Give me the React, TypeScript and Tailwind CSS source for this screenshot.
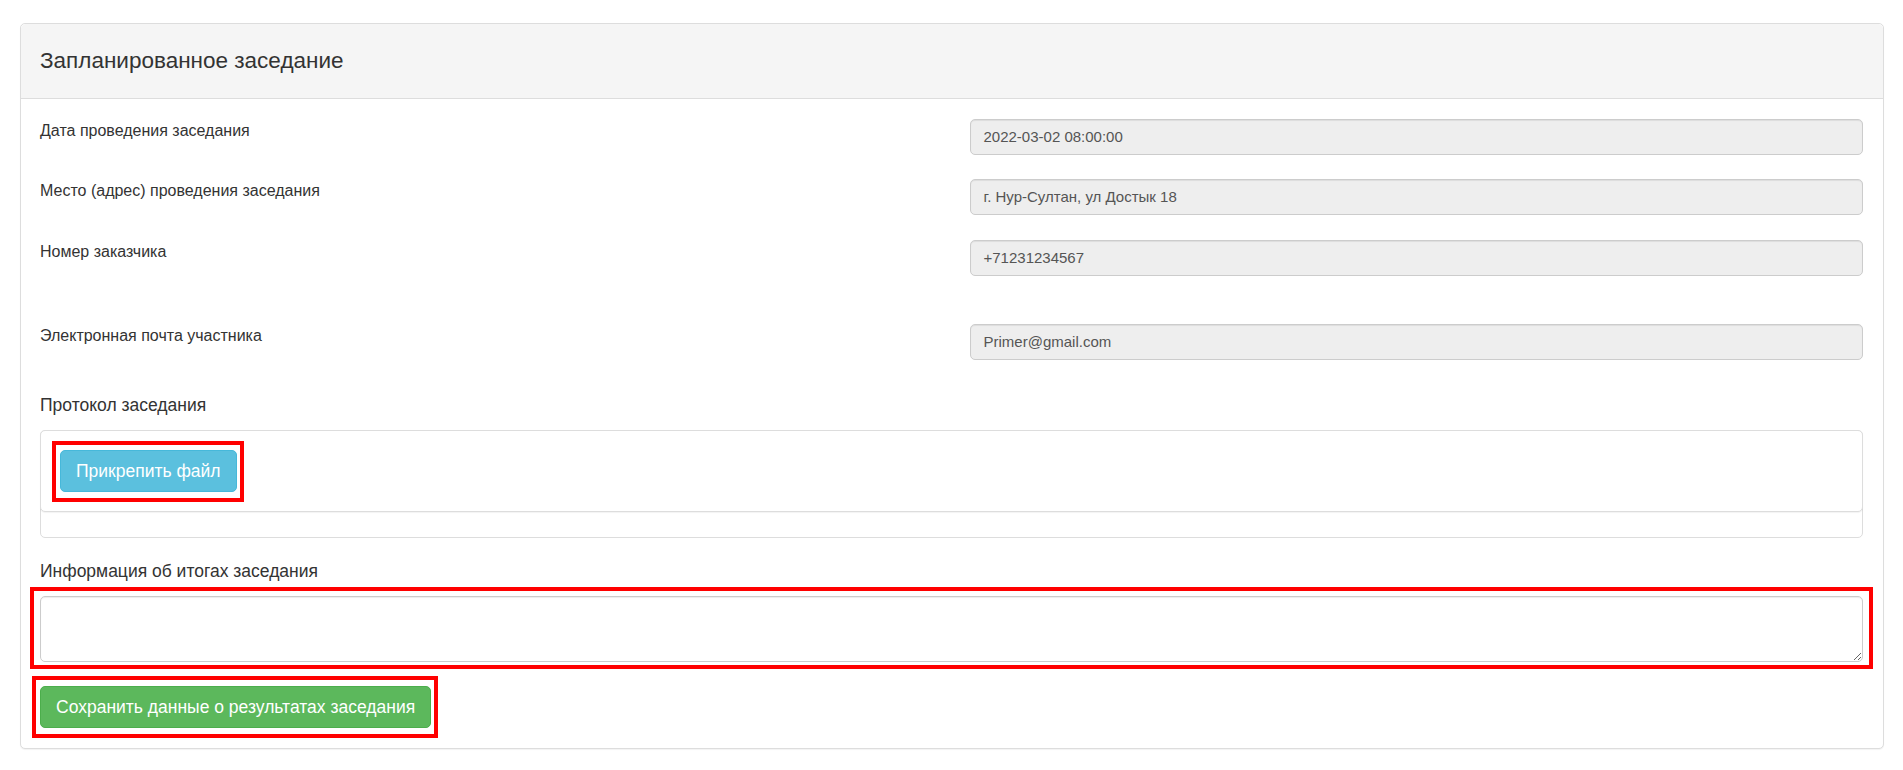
import React from "react";

function RedMark({ className }: { className: string }) {
  return (
    <div
      className={`pointer-events-none absolute border-4 border-[#ff0000] ${className}`}
    />
  );
}

function Row({
  label,
  value,
  className,
}: {
  label: string;
  value: string;
  className: string;
}) {
  return (
    <div className={`grid grid-cols-[930px_1fr] ${className}`}>
      <div className="text-[16px] leading-[23px] text-[#333]">{label}</div>
      <div className="flex h-[36px] items-center rounded-[5px] border border-[#ccc] bg-[#eeeeee] px-[12.5px] text-[15px] text-[#555] shadow-[inset_0_1px_1px_rgba(0,0,0,0.075)]">
        {value}
      </div>
    </div>
  );
}

export default function App() {
  return (
    <div
      className="min-h-[770px] bg-white pl-[20px] pr-[19px] pt-[23px]"
      style={{ fontFamily: '"Liberation Sans", Arial, sans-serif' }}
    >
      <div className="rounded-[5px] border border-[#ddd] bg-white shadow-[0_1px_1px_rgba(0,0,0,0.05)]">
        <div className="flex h-[75px] items-center rounded-t-[5px] border-b border-[#ddd] bg-[#f5f5f5] pb-[2px] pl-[19px]">
          <h3 className="text-[22.5px] leading-[25px] text-[#333]">
            Запланированное заседание
          </h3>
        </div>
        <div className="pb-[20px] pl-[19px] pr-[20px] pt-[20px]">
          <Row
            className="mb-[24px]"
            label="Дата проведения заседания"
            value="2022-03-02 08:00:00"
          />
          <Row
            className="mb-[25px]"
            label="Место (адрес) проведения заседания"
            value="г. Нур-Султан, ул Достык 18"
          />
          <Row
            className="mb-[48px]"
            label="Номер заказчика"
            value="+71231234567"
          />
          <Row
            className=""
            label="Электронная почта участника"
            value="Primer@gmail.com"
          />

          <div className="mb-[12px] mt-[33px] text-[17.5px] leading-[25px] text-[#333]">
            Протокол заседания
          </div>
          <div className="h-[108px] rounded-[5px] border border-[#ddd] bg-white">
            <div className="-mx-px -mt-px rounded-[5px] border border-[#ddd] bg-white p-[19px] shadow-[0_1px_1px_rgba(0,0,0,0.05)]">
              <div className="relative inline-block align-top">
                <button className="flex h-[42px] items-center rounded-[5px] border border-[#46b8da] bg-[#5bc0de] px-[15px] text-[17.5px] text-white">
                  Прикрепить файл
                </button>
                <RedMark className="-bottom-[10px] -left-[8px] -right-[7px] -top-[9px]" />
              </div>
            </div>
          </div>

          <div className="mb-[12px] mt-[21px] text-[17.5px] leading-[25px] text-[#333]">
            Информация об итогах заседания
          </div>
          <div className="relative">
            <textarea className="block h-[66px] w-full resize-y rounded-[5px] border border-[#ccc] bg-white px-[12.5px] py-[7px] text-[15px] text-[#555] shadow-[inset_0_1px_1px_rgba(0,0,0,0.075)] outline-none" />
            <RedMark className="-bottom-[7px] -left-[10px] -right-[10px] -top-[9px]" />
          </div>

          <div className="relative mt-[24px] inline-block align-top">
            <button className="flex h-[42px] items-center rounded-[5px] border border-[#4cae4c] bg-[#5cb85c] px-[15px] text-[17.5px] text-white">
              Сохранить данные о результатах заседания
            </button>
            <RedMark className="-bottom-[10px] -left-[8px] -right-[7px] -top-[10px]" />
          </div>
        </div>
      </div>
    </div>
  );
}
